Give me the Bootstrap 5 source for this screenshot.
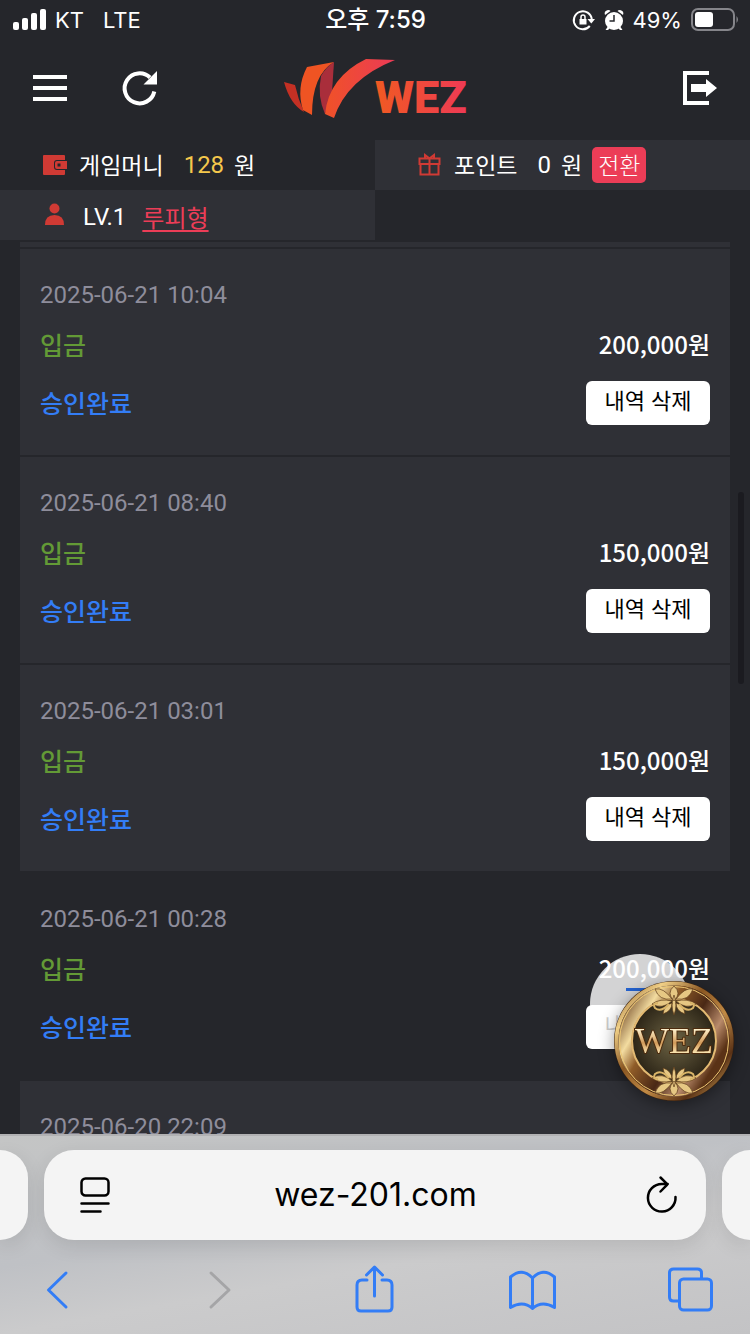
<!DOCTYPE html>
<html lang="ko">
<head>
<meta charset="utf-8">
<meta name="viewport" content="width=device-width, initial-scale=1">
<title>WEZ</title>
<link href="https://cdn.jsdelivr.net/npm/bootstrap@5.3.0/dist/css/bootstrap.min.css" rel="stylesheet">
<style>
  :root { --ink: #25262b; --panel: #2f3036; --blue: #337df6; --rose: #ec3d57; --brick: #d03a34; }
  body { background: var(--ink); color: #fff; font-family: Roboto, "Noto Sans CJK KR", sans-serif; font-size: 24px; line-height: 34px; }
  svg { display: block; flex: none; overflow: visible; }
  .status-bar { height: 40px; padding: 0 11px 0 12px; font: 22px/40px Inter, "Noto Sans CJK KR", sans-serif; }
  .status-bar > * { flex: 1 1 0; }
  .clock { font-size: 24px; font-weight: 500; }
  .carrier { gap: 9px; }
  .top-nav { height: 100px; padding: 0 33px 4px; }
  .icon-btn { background: none; border: 0; padding: 0; color: inherit; }
  .side { flex: 1 1 0; }
  .info-cell { height: 50px; padding-left: 43px; }
  .lit { background: var(--panel); }
  .ko { font-family: "Noto Sans CJK KR", sans-serif; font-size: 23px; line-height: 34px; padding-bottom: 2px; }
  .near { margin-left: 10px; }
  .far { margin-left: 20px; }
  .coins { color: #f5c84c; }
  .swap-btn { background: var(--rose); color: #fff; border: 0; border-radius: 5px; height: 36px; padding: 0 6px 2px; font-weight: 300; }
  .user-link { color: var(--rose); font-family: "Noto Sans CJK KR", sans-serif; text-underline-offset: 3px; text-decoration-thickness: 2px; }
  .history { padding: 2px 20px 0; min-height: 0; }
  .tail { height: 5px; flex: none; }
  .entry { background: var(--panel); padding: 30px 20px; margin-top: 2px; flex: none; }
  .entry.plain { background: transparent; }
  .entry time { color: #8e8d9b; display: block; line-height: 32px; }
  .entry .line { font-family: "Noto Sans CJK KR", sans-serif; font-weight: 500; }
  .amount-line { height: 70px; padding-bottom: 4px; }
  .kind { color: #639a36; font-size: 25px; }
  .state { color: var(--blue); font-size: 25px; padding-bottom: 2px; }
  .del-btn { background: #fff; color: #000; border: 0; border-radius: 6px; width: 124px; height: 44px; padding: 0 0 8px; font-size: 22px; font-weight: 400; line-height: 36px; }
  .scroll-thumb { position: absolute; right: 6px; top: 252px; width: 6px; height: 192px; border-radius: 3px; background: #1b1b20; }
  .up-btn { position: absolute; right: 60px; bottom: 80px; width: 100px; height: 100px; border-radius: 50%; border: 0; padding: 34px 36px; background: #ffffffcc; }
  .up-btn i { height: 3px; background: #2563cf; }
  .medal { position: absolute; right: 15px; bottom: 32px; filter: drop-shadow(0 4px 8px #0006); }
  .browser { background: linear-gradient(170deg, #c4c5c5, #bfc1c5 40%, #cbcbcc 60%, #c3c3c5); border-top: 2px solid #b1b1b3; flex: none; height: 200px; color: #000; padding-top: 14px; }
  .tab-pill { background: #f4f4f4; height: 90px; box-shadow: 0 6px 20px #0000001a; }
  .edge { flex: 0 0 28px; }
  .edge-l { border-radius: 0 28px 28px 0; }
  .edge-r { border-radius: 28px 0 0 28px; }
  .address { border-radius: 30px; padding: 0 27px 0 36px; }
  .address input { border: 0; background: none; text-align: center; min-width: 0; padding: 0 4px 0 0; font: 32px/44px Inter, sans-serif; color: #000; }
  .tools { padding: 20px 36px 0 33px; color: var(--blue); }
</style>
</head>
<body>
<div class="vh-100 d-flex flex-column overflow-hidden">
  <div class="status-bar d-flex align-items-center flex-shrink-0">
    <div class="d-flex align-items-center carrier">
      <svg width="34" height="22" viewBox="0 0 34 22" fill="#fff"><rect x="1" y="13" width="6" height="8" rx="2"/><rect x="10" y="9" width="6" height="12" rx="2"/><rect x="19" y="4" width="6" height="17" rx="2"/><rect x="28" y="0" width="6" height="21" rx="2"/></svg>
      <span>KT</span><span class="near">LTE</span>
    </div>
    <div class="text-center clock">오후 7:59</div>
    <div class="d-flex align-items-center justify-content-end carrier">
      <svg width="22" height="22" viewBox="0 0 22 22" fill="none" stroke="#fff" stroke-width="2"><path d="M16.800 17a9 9 0 1 1 2-6.500"/><path d="M14.500 10h7.500l-3.700 4.500z" fill="#fff" stroke="none"/><rect x="6.500" y="10" width="7" height="5.500" fill="#fff" stroke="none"/><path d="M8 10V8a2 2 0 0 1 4 0v2" stroke-width="1.500"/></svg>
      <svg width="20" height="22" viewBox="0 0 20 22"><circle cx="10" cy="12" r="9" fill="#fff"/><path d="M1 6Q-.5 2 4 1q2 0 2.500 1zM19 6q1.500-4-3-5-2 0-2.500 1zM3.500 18l-2 3h2.500l2-2zM16.500 18l2 3H16l-2-2z" fill="#fff"/><path d="M10 6v6H5.500" fill="none" stroke="#25262b" stroke-width="1.500"/></svg>
      <span>49%</span>
      <svg width="48" height="24" viewBox="0 0 48 24"><rect x="1" y="1" width="42" height="21" rx="6" fill="none" stroke="#85858a" stroke-width="2"/><rect x="4" y="4" width="18" height="15" rx="3" fill="#fff"/><path d="M45.500 8q3 3.500 0 7z" fill="#85858a"/></svg>
    </div>
  </div>

  <nav class="top-nav d-flex align-items-center flex-shrink-0">
    <div class="side d-flex align-items-center">
      <button class="icon-btn" type="button" aria-label="메뉴"><svg width="34" height="34" viewBox="0 0 34 34" fill="#fff"><path d="M0 4h34v4H0zM0 15h34v4H0zM0 26h34v4H0z"/></svg></button>
      <button class="icon-btn ms-5" type="button" aria-label="새로고침"><svg width="50" height="34" viewBox="-8 0 50 34"><path d="M31.300 20.500A15 15 0 1 1 27 6.500" fill="none" stroke="#fff" stroke-width="4"/><path d="M34 0v13.500H20.500z" fill="#fff"/></svg></button>
    </div>
    <a href="#" aria-label="WEZ">
      <svg width="184" height="60" viewBox="0 0 184 60">
        <defs>
          <linearGradient id="flame" x1="0" x2="1"><stop offset="0" stop-color="#f05a22"/><stop offset="1" stop-color="#ee3a55"/></linearGradient>
          <linearGradient id="ribbon" gradientUnits="userSpaceOnUse" x1="35" x2="110" y1="0" y2="0"><stop offset="0" stop-color="#f05423"/><stop offset="1" stop-color="#ec3b55"/></linearGradient>
        </defs>
        <path d="M1 24l11 3q3 14 9 27Q7 46 1 24z" fill="#c43024"/>
        <path d="M24 9l27-5Q29 17 29 57l-9-5Q13 30 24 9z" fill="#ef5423"/>
        <path d="M38 18q5-9 13-14l-2 30-7 22Q34 38 38 18z" fill="#a92e3b"/>
        <path d="M83 1l29 1Q64 21 51 60l-9-4Q46 19 83 1z" fill="url(#ribbon)"/>
        <text x="92" y="55" font-family="Roboto" font-weight="900" font-size="45" fill="url(#flame)">WEZ</text>
      </svg>
    </a>
    <div class="side d-flex justify-content-end">
      <button class="icon-btn" type="button" aria-label="로그아웃"><svg width="34" height="34" viewBox="0 0 34 34"><path d="M26 2H2v30h24" fill="none" stroke="#fff" stroke-width="4"/><path d="M8 13h15V8l11 9-11 9v-5H8z" fill="#fff"/></svg></button>
    </div>
  </nav>

  <div class="row row-cols-2 g-0 flex-shrink-0">
    <div class="col"><div class="info-cell d-flex align-items-center">
      <svg width="24" height="20" viewBox="0 0 24 20"><path d="M1 0h20q1 0 1 1v4h-8q-3 0-3 3v4q0 3 3 3h8v4q0 1-1 1H1q-1 0-1-1V1q0-1 1-1z" fill="#d03a34"/><path d="M14 6h10v8H14q-2 0-2-2V8q0-2 2-2z" fill="#d03a34"/><rect x="14.500" y="8.500" width="3" height="3" fill="#25262b"/></svg>
      <span class="ko ms-2 ps-1">게임머니</span><span class="coins far">128</span><span class="ko near">원</span>
    </div></div>
    <div class="col"><div class="info-cell lit d-flex align-items-center">
      <svg width="24" height="22" viewBox="0 0 24 22" fill="none" stroke="#d03a34" stroke-width="2"><path d="M1.500 4.500h20v5.500h-20zM2.500 10v10.500h18V10M11.500 4v16M11 4L7 1v3M12 4l4-3v3"/></svg>
      <span class="ko ms-2 ps-1">포인트</span><span class="far">0</span><span class="ko near">원</span>
      <button class="swap-btn ko near" type="button">전환</button>
    </div></div>
    <div class="col"><div class="info-cell lit d-flex align-items-center pt-1">
      <svg width="24" height="28" viewBox="-2 0 24 28" fill="#d03a34"><circle cx="9.500" cy="5.500" r="5"/><path d="M0 22q0-10 9.500-10T19 22z"/></svg>
      <span class="ms-3">LV.1</span><a class="user-link ms-3" href="#">루피형</a>
    </div></div>
  </div>

  <div class="position-relative d-flex flex-column flex-grow-1 overflow-hidden history">
    <div class="tail lit"></div>
    <article class="entry">
      <time>2025-06-21 10:04</time>
      <div class="line amount-line d-flex justify-content-between align-items-center"><span class="kind">입금</span><span>200,000원</span></div>
      <div class="line d-flex justify-content-between align-items-center"><span class="state">승인완료</span><button class="del-btn" type="button">내역 삭제</button></div>
    </article>
    <article class="entry">
      <time>2025-06-21 08:40</time>
      <div class="line amount-line d-flex justify-content-between align-items-center"><span class="kind">입금</span><span>150,000원</span></div>
      <div class="line d-flex justify-content-between align-items-center"><span class="state">승인완료</span><button class="del-btn" type="button">내역 삭제</button></div>
    </article>
    <article class="entry">
      <time>2025-06-21 03:01</time>
      <div class="line amount-line d-flex justify-content-between align-items-center"><span class="kind">입금</span><span>150,000원</span></div>
      <div class="line d-flex justify-content-between align-items-center"><span class="state">승인완료</span><button class="del-btn" type="button">내역 삭제</button></div>
    </article>
    <article class="entry plain">
      <time>2025-06-21 00:28</time>
      <div class="line amount-line d-flex justify-content-between align-items-center"><span class="kind">입금</span><span>200,000원</span></div>
      <div class="line d-flex justify-content-between align-items-center"><span class="state">승인완료</span><button class="del-btn" type="button">내역 삭제</button></div>
    </article>
    <article class="entry">
      <time>2025-06-20 22:09</time>
    </article>
    <div class="scroll-thumb"></div>
    <button class="up-btn d-flex align-items-start" type="button" aria-label="위로"><i class="w-100"></i></button>
    <a class="medal" href="#" aria-label="WEZ">
      <svg width="122" height="122" viewBox="-61 -61 122 122">
        <defs>
          <linearGradient id="rim" x1="0" y1="0" x2="1" y2="1"><stop offset="0" stop-color="#7a4a1c"/><stop offset=".2" stop-color="#f0cf86"/><stop offset=".4" stop-color="#8a5722"/><stop offset=".6" stop-color="#c08a45"/><stop offset=".8" stop-color="#5a3216"/><stop offset="1" stop-color="#e3b860"/></linearGradient>
          <linearGradient id="band" x1="0" y1="0" x2="1" y2=".6"><stop offset="0" stop-color="#5a3013"/><stop offset=".25" stop-color="#f3dca0"/><stop offset=".4" stop-color="#8f5c28"/><stop offset=".65" stop-color="#4a2815"/><stop offset=".85" stop-color="#b88a6a"/><stop offset="1" stop-color="#5a3216"/></linearGradient>
          <radialGradient id="dish"><stop offset="0" stop-color="#6e6444"/><stop offset="1" stop-color="#2c2517"/></radialGradient>
          <linearGradient id="letter" x1="0" y1="0" x2="0" y2="1"><stop offset=".2" stop-color="#fff3cf"/><stop offset=".55" stop-color="#d29a58"/><stop offset=".8" stop-color="#f9e4b0"/></linearGradient>
          <g id="crest" fill="#e6c783" stroke="#5b3a18" stroke-width=".7">
            <path d="M0-55q8 7 0 15q-8-8 0-15zM0-46q4 10 0 20q-4-10 0-20z"/>
            <path id="leaf" d="M2-42q9-12 17-10q-4 12-17 10zM2-40q12-3 20 3q-10 6-20-3zM2-38q8 2 9 11q-9-3-9-11z"/>
            <use href="#leaf" transform="scale(-1 1)"/>
            <path d="M5-37q8 9 14 4q3-5-3-5M-5-37q-8 9-14 4q-3-5 3-5" fill="none" stroke="#d9b468" stroke-width="2"/>
          </g>
        </defs>
        <circle r="60" fill="#3b220f"/>
        <circle r="57.500" fill="none" stroke="url(#rim)" stroke-width="4"/>
        <circle r="49" fill="none" stroke="url(#band)" stroke-width="13"/>
        <circle r="42" fill="url(#dish)" stroke="#e2b972" stroke-width="2"/>
        <circle r="54.500" fill="none" stroke="#edc773"/>
        <use href="#crest"/><use href="#crest" transform="scale(1 -1)"/>
        <text y="12" text-anchor="middle" font-family="Liberation Serif" font-size="36" fill="url(#letter)" stroke="#4d2c0e" stroke-width="2" paint-order="stroke">WEZ</text>
      </svg>
    </a>
  </div>

  <footer class="browser">
    <div class="d-flex gap-3">
      <div class="tab-pill edge edge-l"></div>
      <div class="tab-pill address flex-grow-1 d-flex align-items-center">
        <button class="icon-btn" type="button" aria-label="페이지 메뉴"><svg width="30" height="36" viewBox="0 0 30 36" fill="none" stroke="#000" stroke-width="2.500" stroke-linecap="round"><rect x="1.500" y="1.500" width="27" height="17" rx="4"/><path d="M1.500 26.500h27M1.500 34.500h19"/></svg></button>
        <input class="flex-grow-1" type="text" value="wez-201.com" aria-label="주소">
        <button class="icon-btn" type="button" aria-label="다시 로드"><svg width="34" height="40" viewBox="0 0 34 40" fill="none" stroke="#000" stroke-width="2.500" stroke-linecap="round" stroke-linejoin="round"><path d="M30.500 22a13.800 13.800 0 1 1-13.800-13h6M15.500 2.500l7 6.800-7 7.200"/></svg></button>
      </div>
      <div class="tab-pill edge edge-r"></div>
    </div>
    <div class="tools d-flex justify-content-between">
      <button class="icon-btn" type="button" aria-label="뒤로"><svg width="48" height="60" viewBox="0 0 48 60" fill="none" stroke="currentColor" stroke-width="3" stroke-linecap="round" stroke-linejoin="round"><path d="M33 13L15.500 30 33 47"/></svg></button>
      <button class="icon-btn" type="button" aria-label="앞으로" disabled><svg width="48" height="60" viewBox="0 0 48 60" fill="none" stroke="#a5a5a7" stroke-width="3" stroke-linecap="round" stroke-linejoin="round"><path d="M20 13l18 17-18 17"/></svg></button>
      <button class="icon-btn" type="button" aria-label="공유"><svg width="48" height="60" viewBox="0 0 48 60" fill="none" stroke="currentColor" stroke-width="3" stroke-linecap="round" stroke-linejoin="round"><path d="M17 20h-5q-5 0-5 5v22q0 4 4 4h27q4 0 4-4V25q0-5-5-5h-5M24.500 36V8M16.500 15l8-8 8 8"/></svg></button>
      <button class="icon-btn" type="button" aria-label="책갈피"><svg width="48" height="60" viewBox="0 0 48 60" fill="none" stroke="currentColor" stroke-width="3" stroke-linecap="round" stroke-linejoin="round"><path d="M24.500 18v30.500Q15 40 2.500 47.500V17Q14 7 24.500 18Q35 7 46.500 17v30.500Q34 40 24.500 48.500"/></svg></button>
      <button class="icon-btn" type="button" aria-label="탭"><svg width="48" height="60" viewBox="0 0 48 60" fill="none" stroke="currentColor" stroke-width="3" stroke-linejoin="round"><rect x="13.500" y="19" width="32" height="31" rx="4"/><path d="M13.500 41H7.500q-4 0-4-4V13q0-4 4-4h24q4 0 4 4v6"/></svg></button>
    </div>
  </footer>
</div>
<script src="https://cdn.jsdelivr.net/npm/bootstrap@5.3.0/dist/js/bootstrap.bundle.min.js"></script>
</body>
</html>
